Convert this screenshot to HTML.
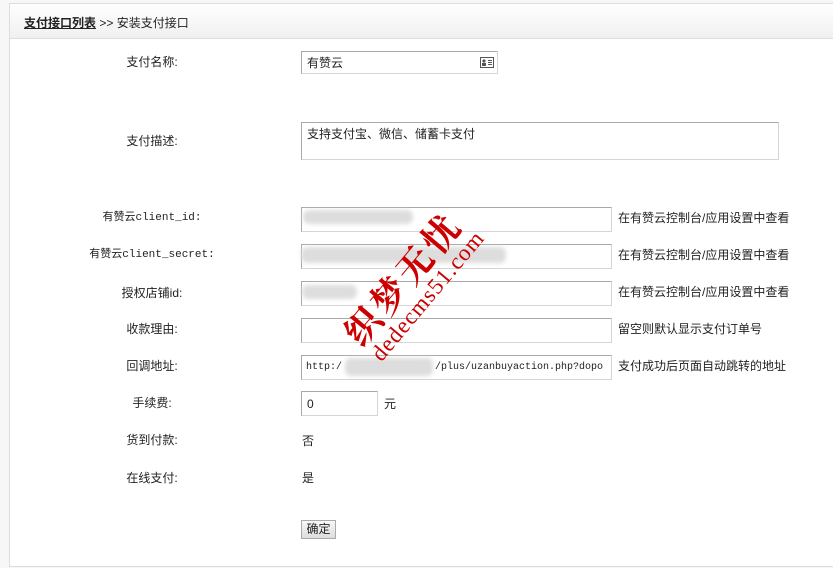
<!DOCTYPE html>
<html><head><meta charset="utf-8"><style>
body{margin:0;width:833px;height:568px;background:#f7f7f7;position:relative;overflow:hidden;font-family:"Liberation Sans","Noto Sans CJK SC","WenQuanYi Zen Hei",sans-serif;font-size:12px;color:#222}
.box{position:absolute;left:9px;top:3px;width:840px;height:562px;background:#fff;border:1px solid #ddd}
.hd{position:absolute;left:10px;top:4px;width:830px;height:34px;background:linear-gradient(#fff,#f0f0f0);border-bottom:1px solid #ddd}
.hd span{position:absolute;left:14px;top:10px;font-size:12px}
.hd a{color:#222;font-weight:bold;text-decoration:underline}
.a{position:absolute;white-space:nowrap;line-height:14px}
.lb{position:absolute;width:200px;left:52px;text-align:center;line-height:14px}
.in{position:absolute;left:301px;border:1px solid #a9a9a9;border-right-color:#d5d5d5;border-bottom-color:#d5d5d5;background:#fff;box-sizing:border-box;line-height:14px}
.bl{position:absolute;background:#ddd;filter:blur(2px);border-radius:6px}
.tip{position:absolute;left:618px;line-height:14px}
.wm{position:absolute;width:0;height:0}
.wm div{position:absolute;transform:translate(-50%,-50%) rotate(-50deg);white-space:nowrap;color:#c00}
</style></head><body>
<div class="box"></div>
<div class="hd"><span><a>支付接口列表</a> &gt;&gt; 安装支付接口</span></div>

<div class="lb" style="top:55px">支付名称:</div>
<div class="in" style="top:51px;width:197px;height:23px;padding:4px 5px">有赞云
<svg style="position:absolute;right:3px;top:5px" width="14" height="11"><rect x="0.5" y="0.5" width="13" height="10" fill="#fff" stroke="#555"/><circle cx="4" cy="4" r="1.6" fill="#555"/><rect x="2" y="6" width="4" height="3" fill="#555"/><rect x="8" y="3" width="4" height="1" fill="#555"/><rect x="8" y="5" width="4" height="1" fill="#555"/><rect x="8" y="7" width="4" height="1" fill="#555"/></svg></div>

<div class="lb" style="top:134px">支付描述:</div>
<div class="in" style="top:122px;width:478px;height:38px;padding:4px 5px">支持支付宝、微信、储蓄卡支付</div>

<div class="lb" style="top:211px;font-family:'Liberation Mono','Noto Sans CJK SC',monospace;font-size:11px">有赞云client_id:</div>
<div class="in" style="top:207px;width:311px;height:25px"></div>
<div class="bl" style="left:303px;top:210px;width:110px;height:14px"></div>
<div class="tip" style="top:211px">在有赞云控制台/应用设置中查看</div>

<div class="lb" style="top:248px;font-family:'Liberation Mono','Noto Sans CJK SC',monospace;font-size:11px">有赞云client_secret:</div>
<div class="in" style="top:244px;width:311px;height:25px"></div>
<div class="bl" style="left:301px;top:247px;width:205px;height:16px"></div>
<div class="tip" style="top:248px">在有赞云控制台/应用设置中查看</div>

<div class="lb" style="top:286px">授权店铺id:</div>
<div class="in" style="top:281px;width:311px;height:25px"></div>
<div class="bl" style="left:302px;top:285px;width:55px;height:14px"></div>
<div class="tip" style="top:285px">在有赞云控制台/应用设置中查看</div>

<div class="lb" style="top:322px">收款理由:</div>
<div class="in" style="top:318px;width:311px;height:25px"></div>
<div class="tip" style="top:322px">留空则默认显示支付订单号</div>

<div class="lb" style="top:359px">回调地址:</div>
<div class="in" style="top:355px;width:311px;height:25px;padding:5px 4px;font-family:'Liberation Mono',monospace;font-size:10px;white-space:nowrap;overflow:hidden">http:/<span style="display:inline-block;width:93px"></span>/plus/uzanbuyaction.php?dopo</div>
<div class="bl" style="left:345px;top:358px;width:88px;height:18px"></div>
<div class="tip" style="top:359px">支付成功后页面自动跳转的地址</div>

<div class="lb" style="top:396px">手续费:</div>
<div class="in" style="top:391px;width:77px;height:25px;padding:5px 5px">0</div>
<div class="a" style="left:384px;top:397px">元</div>

<div class="lb" style="top:433px">货到付款:</div>
<div class="a" style="left:302px;top:434px">否</div>
<div class="lb" style="top:471px">在线支付:</div>
<div class="a" style="left:302px;top:471px">是</div>

<div class="a" style="left:301px;top:520px;width:35px;height:19px;border:1px solid #aaa;background:linear-gradient(#f8f8f8,#ddd);box-sizing:border-box;text-align:center;line-height:17px">确定</div>

<div class="wm" style="left:402px;top:278px"><div style="font-size:36px;font-family:'Noto Serif CJK SC',serif;font-weight:bold;letter-spacing:4px">织梦无忧</div></div>
<div class="wm" style="left:428px;top:296px"><div style="font-size:23px;font-family:'Liberation Serif',serif;letter-spacing:1px">dedecms51.com</div></div>
</body></html>
